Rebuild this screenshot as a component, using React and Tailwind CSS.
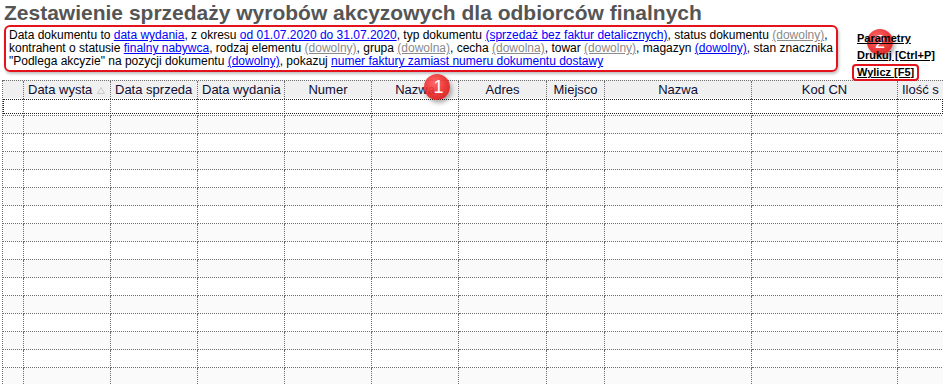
import React from "react";

const B = ({ children }) => (
  <span className="text-[#0000ff] underline">{children}</span>
);
const G = ({ children }) => (
  <span className="text-[#8a8a8a] underline">{children}</span>
);

const widths = [21, 87, 87, 87, 87, 87, 88, 58, 147, 146, 60];

const headers = [
  { t: "", a: "" },
  { t: "Data wysta", a: "left", sort: true },
  { t: "Data sprzeda", a: "left" },
  { t: "Data wydania", a: "left" },
  { t: "Numer", a: "center" },
  { t: "Nazwa", a: "center" },
  { t: "Adres", a: "center" },
  { t: "Miejsco", a: "center" },
  { t: "Nazwa", a: "center" },
  { t: "Kod CN", a: "center" },
  { t: "Ilość s", a: "left" },
];

function Badge({ n, className }) {
  return (
    <div
      className={
        "absolute w-[26px] h-[26px] rounded-full flex items-center justify-center text-white text-[18px] leading-none opacity-90 shadow-[2px_3px_4px_rgba(0,0,0,0.35)] bg-[radial-gradient(circle_at_40%_35%,#ff5a5a_0%,#e82222_55%,#c80f0f_100%)] " +
        className
      }
      style={{ fontFamily: "'Liberation Sans', Arial, sans-serif" }}
    >
      {n}
    </div>
  );
}

export default function App() {
  const rows = Array.from({ length: 17 });
  return (
    <div
      className="relative w-[943px] h-[384px] overflow-hidden bg-white text-black"
      style={{ fontFamily: "'Liberation Sans', Arial, sans-serif" }}
    >
      <h1 className="text-[21px] font-bold text-[#555555] leading-[24px] pl-[4px] pt-[1px] h-[25px] whitespace-nowrap">
        Zestawienie sprzedaży wyrobów akcyzowych dla odbiorców finalnych
      </h1>

      <div className="flex h-[55px]">
        <div className="ml-[4px] w-[834px] h-[47px] border-2 border-[#e4121c] rounded-[6px] px-[3px] pt-[2px] text-[12px] leading-[13px] whitespace-nowrap shadow-[1px_2px_3px_rgba(0,0,0,0.25)]">
          <div>
            Data dokumentu to <B>data wydania</B>, z okresu{" "}
            <B>od 01.07.2020 do 31.07.2020</B>, typ dokumentu{" "}
            <B>(sprzedaż bez faktur detalicznych)</B>, status dokumentu{" "}
            <G>(dowolny)</G>,
          </div>
          <div>
            kontrahent o statusie <B>finalny nabywca</B>, rodzaj elementu{" "}
            <G>(dowolny)</G>, grupa <G>(dowolna)</G>, cecha <G>(dowolna)</G>,
            towar <G>(dowolny)</G>, magazyn <B>(dowolny)</B>, stan znacznika
          </div>
          <div>
            "Podlega akcyzie" na pozycji dokumentu <B>(dowolny)</B>, pokazuj{" "}
            <B>numer faktury zamiast numeru dokumentu dostawy</B>
          </div>
        </div>

        <div className="ml-[14px] pt-[5px] flex flex-col items-start text-[11px] font-bold leading-[17px] relative z-10">
          <span className="underline h-[17px] pl-[5px]">Parametry</span>
          <span className="underline h-[17px] pl-[5px]">Drukuj [Ctrl+P]</span>
          <span className="h-[17px] border-2 border-[#e4121c] rounded-[4px] pl-[3px] pr-[3px] leading-[13px] bg-white">
            <span className="underline">Wylicz [F5]</span>
          </span>
        </div>
      </div>

      <div className="ml-[2px] border-l border-dotted border-[#6e6e6e]">
        <div className="flex h-[18px] bg-[#f0f0f0] border-t border-dotted border-[#6e6e6e]">
          {headers.map((h, i) => (
            <div
              key={i}
              style={{ width: widths[i], minWidth: widths[i] }}
              className={
                "h-[18px] border-r border-b border-dotted border-[#6e6e6e] overflow-hidden whitespace-nowrap text-[13px] leading-[17px] text-[#0d0d35] flex items-center " +
                (h.a === "center"
                  ? "justify-center"
                  : "justify-start pl-[4px]")
              }
            >
              <span>{h.t}</span>
              {h.sort && (
                <svg
                  width="8"
                  height="7"
                  viewBox="0 0 8 7"
                  className="ml-[5px] mt-[2px]"
                >
                  <path
                    d="M4 0.5 L7.5 6.5 L0.5 6.5 Z"
                    fill="none"
                    stroke="#c8c8c8"
                    strokeWidth="1"
                  />
                </svg>
              )}
            </div>
          ))}
        </div>
        {rows.map((_, r) => (
          <div
            key={r}
            className={
              "relative flex h-[18px] " +
              (r % 2 === 0 ? "bg-white" : "bg-[#fafafa]")
            }
          >
            {widths.map((w, i) => (
              <div
                key={i}
                style={{ width: w, minWidth: w }}
                className="h-[18px] border-r border-b border-dotted border-[#6e6e6e]"
              />
            ))}
            {r === 0 && (
              <div className="absolute left-0 right-0 top-[1px] bottom-[2px] border border-dotted border-[#222]" />
            )}
          </div>
        ))}
      </div>

      <Badge n="1" className="left-[424px] top-[74px] pl-[3px]" />
      <Badge n="2" className="left-[867px] top-[29px] z-0" />
    </div>
  );
}
